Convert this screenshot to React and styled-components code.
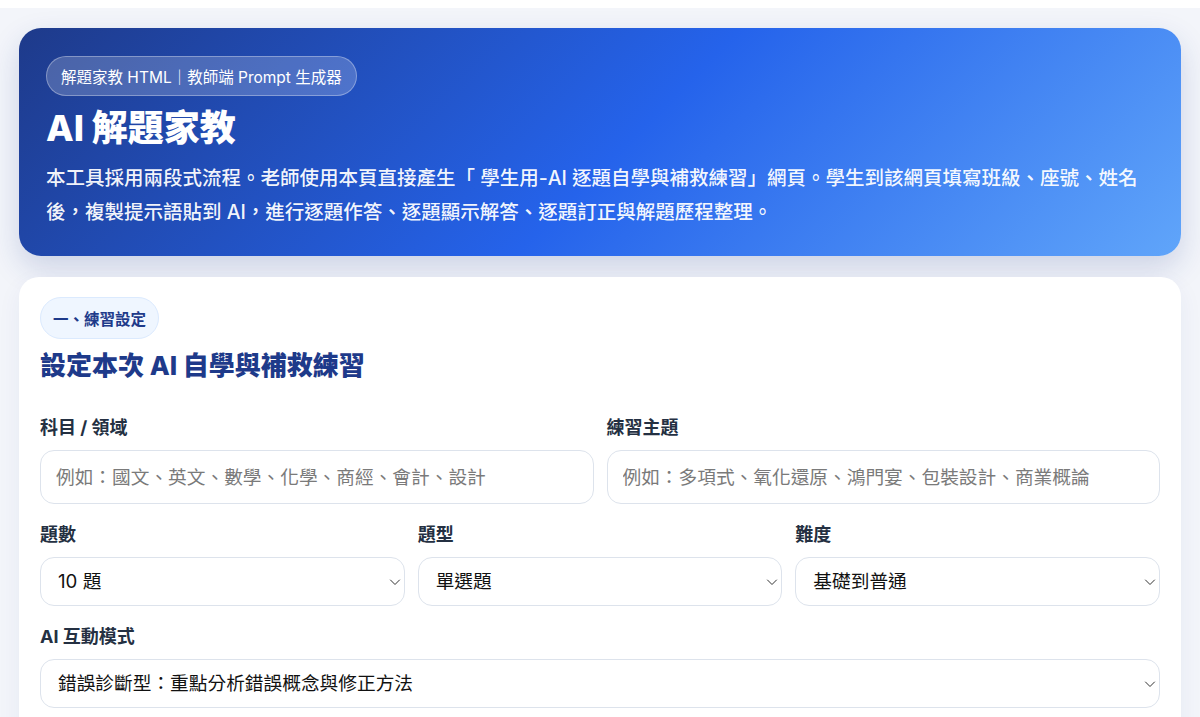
import React from "react";
import styled, { createGlobalStyle } from "styled-components";

const Global = createGlobalStyle`
  html { background: #ffffff; }
  body {
    margin: 8px 0 0 0;
    background: #f3f5fa;
    font-family: Inter, "Noto Sans CJK TC", "Noto Sans", sans-serif;
    color: #1f2937;
  }
  * { box-sizing: border-box; }
`;

const Page = styled.div`
  min-height: 709px;
  background: #f3f5fa;
  padding: 20px 19px 24px;
  display: flex;
  flex-direction: column;
  gap: 21px;
`;

const Hero = styled.header`
  border-radius: 22px;
  padding: 28px 27px 27px;
  color: #ffffff;
  background: linear-gradient(135deg, #1e3a8a 0%, #2563eb 52%, #60a5fa 100%);
  box-shadow: 0 12px 30px rgba(30, 58, 138, 0.18);
`;

const HeroBadge = styled.div`
  display: inline-flex;
  align-items: center;
  height: 40px;
  padding: 0 14px;
  border-radius: 999px;
  background: rgba(255, 255, 255, 0.2);
  border: 1px solid rgba(255, 255, 255, 0.32);
  font-size: 15.5px;
  font-weight: 400;
`;

const HeroTitle = styled.h1`
  margin: 8px 0 9px;
  font-size: 36px;
  line-height: 48px;
  font-weight: 800;
`;

const HeroText = styled.p`
  margin: 0;
  font-size: 19.5px;
  line-height: 34px;
  font-weight: 500;
  color: rgba(255, 255, 255, 0.96);
`;

const Card = styled.section`
  background: #ffffff;
  border-radius: 20px;
  padding: 20px 21px 24px;
  box-shadow: 0 8px 24px rgba(30, 58, 138, 0.06);
`;

const StepBadge = styled.div`
  display: inline-flex;
  align-items: center;
  height: 42px;
  padding: 0 12px;
  border-radius: 999px;
  background: #eff6ff;
  border: 1px solid #dbeafe;
  color: #1e3a8a;
  font-size: 15.5px;
  font-weight: 700;
`;

const CardTitle = styled.h2`
  margin: 10px 0 33px;
  font-size: 26px;
  line-height: 34px;
  font-weight: 800;
  color: #1e3a8a;
`;

const Grid = styled.div`
  display: grid;
  grid-template-columns: repeat(${(p) => p.$cols}, 1fr);
  column-gap: 13px;
  margin-bottom: 19px;
`;

const Field = styled.label`
  display: flex;
  flex-direction: column;
  gap: 10px;
`;

const Label = styled.span`
  font-size: 18px;
  line-height: 24px;
  font-weight: 700;
  color: #243042;
`;

const TextInput = styled.input`
  height: 54px;
  width: 100%;
  border: 1px solid #dde3ec;
  border-radius: 14px;
  padding: 0 15px;
  font-family: inherit;
  font-size: 18.7px;
  color: #111827;
  background: #ffffff;
  outline: none;
  &::placeholder { color: #7a7a7a; }
`;

const SelectWrap = styled.div`
  position: relative;
`;

const Select = styled.select`
  appearance: none;
  width: 100%;
  height: 49px;
  border: 1px solid #dde3ec;
  border-radius: 14px;
  padding: 0 30px 0 17px;
  font-family: inherit;
  font-size: 18.7px;
  color: #111111;
  background: #ffffff;
  outline: none;
`;

const Chevron = styled.svg`
  position: absolute;
  right: 4px;
  top: 50%;
  transform: translateY(-50%);
  pointer-events: none;
`;

const Dropdown = ({ value, options }) => (
  <SelectWrap>
    <Select defaultValue={value}>
      {options.map((o) => (
        <option key={o}>{o}</option>
      ))}
    </Select>
    <Chevron width="12" height="12" viewBox="0 0 12 12">
      <path d="M1.5 4 6 8.5 10.5 4" fill="none" stroke="#333" strokeWidth="1" strokeLinecap="round" strokeLinejoin="round" />
    </Chevron>
  </SelectWrap>
);

export default function App() {
  return (
    <>
      <Global />
      <Page>
        <Hero>
          <HeroBadge>解題家教 HTML｜教師端 Prompt 生成器</HeroBadge>
          <HeroTitle>AI 解題家教</HeroTitle>
          <HeroText>
            本工具採用兩段式流程。老師使用本頁直接產生「 學生用-AI 逐題自學與補救練習」網頁。學生到該網頁填寫班級、座號、姓名後，複製提示語貼到 AI，進行逐題作答、逐題顯示解答、逐題訂正與解題歷程整理。
          </HeroText>
        </Hero>

        <Card>
          <StepBadge>一、練習設定</StepBadge>
          <CardTitle>設定本次 AI 自學與補救練習</CardTitle>

          <Grid $cols={2}>
            <Field>
              <Label>科目 / 領域</Label>
              <TextInput placeholder="例如：國文、英文、數學、化學、商經、會計、設計" />
            </Field>
            <Field>
              <Label>練習主題</Label>
              <TextInput placeholder="例如：多項式、氧化還原、鴻門宴、包裝設計、商業概論" />
            </Field>
          </Grid>

          <Grid $cols={3}>
            <Field>
              <Label>題數</Label>
              <Dropdown value="10 題" options={["5 題", "10 題", "15 題", "20 題"]} />
            </Field>
            <Field>
              <Label>題型</Label>
              <Dropdown value="單選題" options={["單選題", "多選題", "填充題", "問答題"]} />
            </Field>
            <Field>
              <Label>難度</Label>
              <Dropdown value="基礎到普通" options={["基礎", "基礎到普通", "普通到進階", "進階"]} />
            </Field>
          </Grid>

          <Grid $cols={1}>
            <Field>
              <Label>AI 互動模式</Label>
              <Dropdown
                value="錯誤診斷型：重點分析錯誤概念與修正方法"
                options={["錯誤診斷型：重點分析錯誤概念與修正方法", "引導提問型：逐步提示引導思考", "完整講解型：提供詳細解題步驟"]}
              />
            </Field>
          </Grid>
        </Card>
      </Page>
    </>
  );
}
